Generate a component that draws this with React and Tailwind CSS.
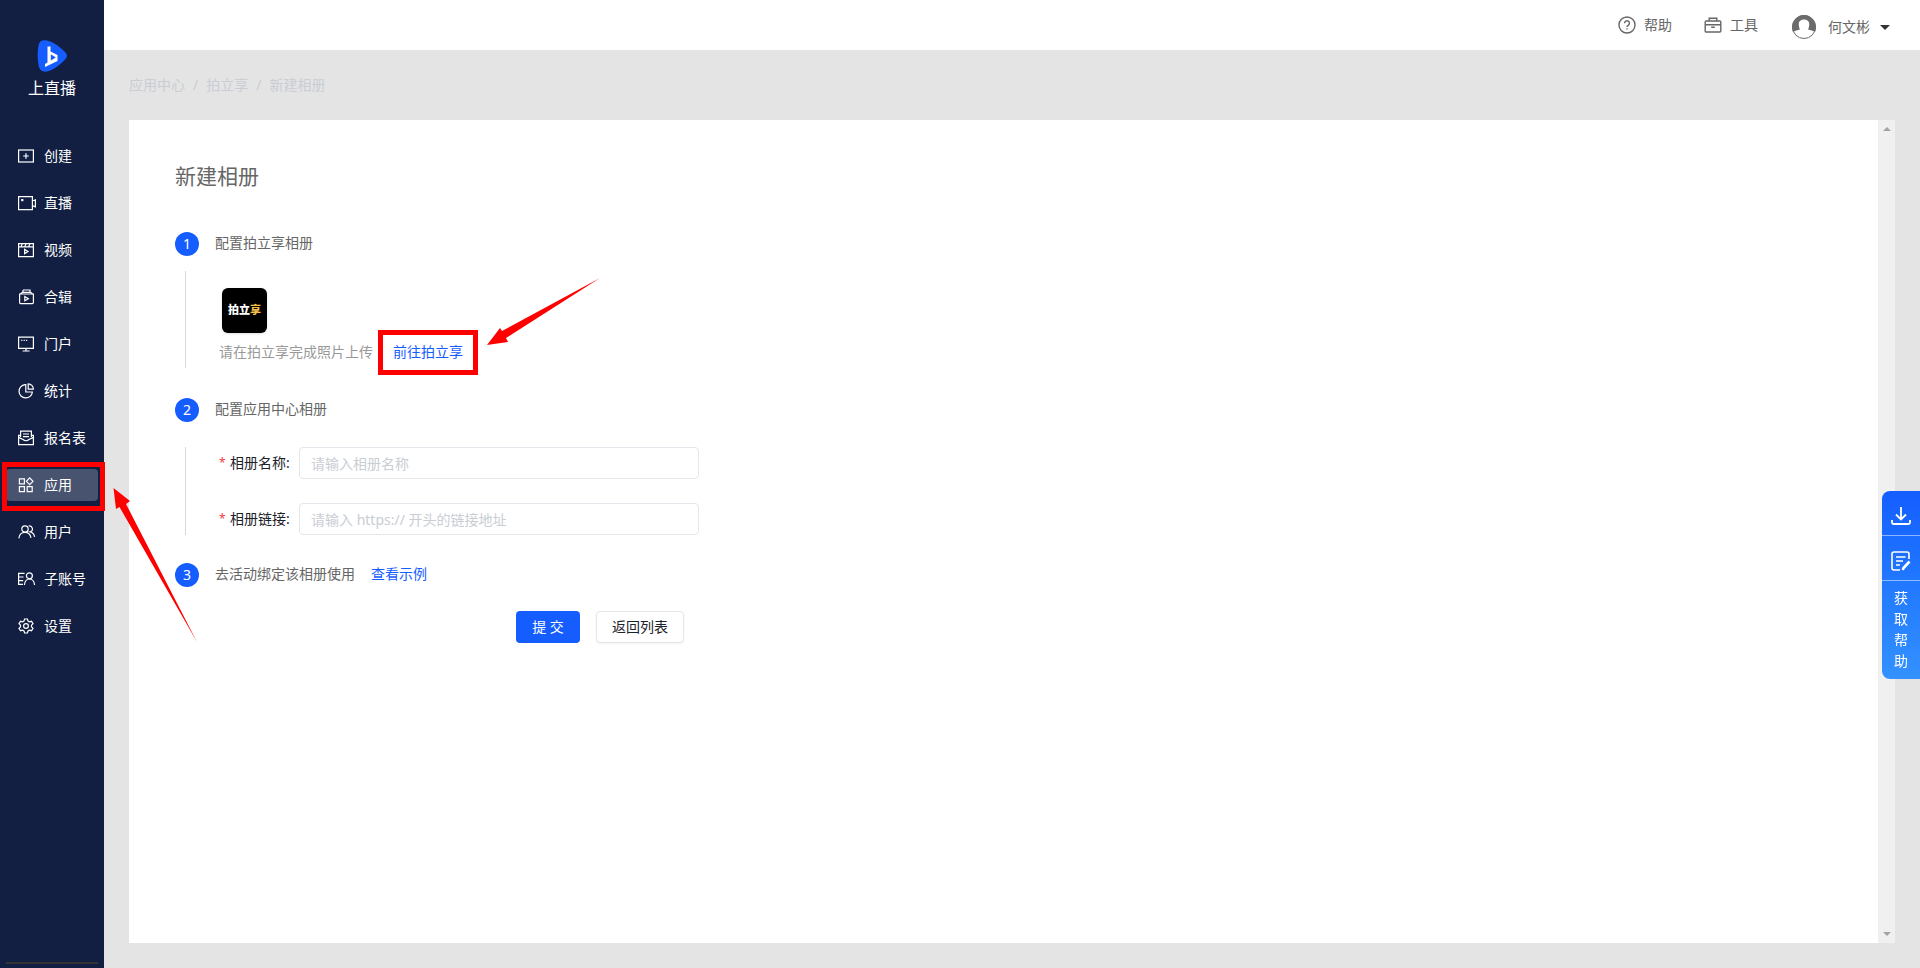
import { clsx } from 'clsx';

function Svg({ children, className, ...props }) {
  return (
    <svg
      viewBox="0 0 16 16"
      fill="none"
      stroke="currentColor"
      strokeWidth="1.2"
      className={clsx('shrink-0', className || 'size-4')}
      aria-hidden="true"
      {...props}
    >
      {children}
    </svg>
  );
}

const icons = {
  create: (
    <Svg>
      <rect x="0.6" y="2" width="14.8" height="12" />
      <path d="M8 5.2v5.6M5.2 8h5.6" />
    </Svg>
  ),
  live: (
    <Svg className="h-4 w-[18px]" viewBox="0 0 18 16">
      <path d="M0.6 1.6h13.8v13H0.6zM14.4 6l3-1.2v7l-3-1.2" />
      <rect x="3.2" y="4" width="2.2" height="2.2" fill="currentColor" stroke="none" />
    </Svg>
  ),
  video: (
    <Svg>
      <path d="M0.6 1.6h14.8v13H0.6zM0.6 4.8h14.8M4.4 1.6L3 4.8M8.2 1.6L6.8 4.8M12 1.6l-1.4 3.2" />
      <path d="M6.6 7.4v4.2L10 9.5z" />
    </Svg>
  ),
  album: (
    <Svg>
      <path d="M1.6 5h13.8v8.6a1 1 0 0 1-1 1H2.6a1 1 0 0 1-1-1zM2.4 5l2-1.7h8.2l2 1.7M5 1h7v2.2" />
      <path d="M6.8 7.6v4.2l3.6-2.1zM5 1v2.2" />
    </Svg>
  ),
  portal: (
    <Svg>
      <path d="M0.6 1.2h14.8v11.2H0.6zM8 12.4v2.4M4.6 15h7" />
      <path d="M3.2 4.4h1.2M5.6 4.4h1.2M8 4.4h1.2" />
    </Svg>
  ),
  stats: (
    <Svg>
      <path d="M7 1.6A6.7 6.7 0 1 0 14.4 9H7.8V1.6z" />
      <path d="M10.2 0.8v5.4h5.2A5.4 5.4 0 0 0 10.2 0.8z" />
    </Svg>
  ),
  form: (
    <Svg>
      <path d="M2.6 7V1.2h10.8V7M2.6 5.4H0.6v9.2h14.8V5.4h-2M0.6 7.4l4.4 2c1.4 1.8 4.6 1.8 6 0l4.4-2" />
      <path d="M5 4h6M5 6.6h6" />
    </Svg>
  ),
  apps: (
    <Svg>
      <path d="M1.4 1.8h5v5h-5zM1.4 9.6h5v5h-5zM9.2 9.6h5v5h-5zM11.7 0.9l3.3 3.4-3.3 3.4-3.3-3.4z" />
    </Svg>
  ),
  users: (
    <Svg className="h-4 w-[18px]" viewBox="0 0 18 16">
      <circle cx="7" cy="5" r="3.2" />
      <path d="M0.8 14.4c.4-3.4 2.8-6 6.2-6s5.4 2.4 6 5.4M10.6 2a3 3 0 0 1 1.6 5.8c2.4.6 4 2.4 4.4 5" />
    </Svg>
  ),
  subAccount: (
    <Svg className="h-4 w-[18px]" viewBox="0 0 18 16">
      <circle cx="11.4" cy="4.8" r="3" />
      <path d="M6.4 14c.4-3.6 2.4-6 5-6s4.8 2.4 5.2 6M6.6 2.4h-6v11H5M0.6 6h5M0.6 9.6h4.6" />
    </Svg>
  ),
  settings: (
    <Svg>
      <path d="M6.6 1h2.8l.6 2 1.5.8 2-.5L15 5.7l-1.5 1.5v1.6l1.5 1.5-1.5 2.4-2-.5-1.5.8-.6 2H6.600l-.6-2-1.5-.8-2 .5L1 10.3l1.5-1.5V7.200L1 5.700l1.500-2.400 2 .5L6 3z" />
      <circle cx="8" cy="8" r="2.4" />
    </Svg>
  ),
};

const menu = [
  { icon: 'create', label: '创建' },
  { icon: 'live', label: '直播' },
  { icon: 'video', label: '视频' },
  { icon: 'album', label: '合辑' },
  { icon: 'portal', label: '门户' },
  { icon: 'stats', label: '统计' },
  { icon: 'form', label: '报名表' },
  { icon: 'apps', label: '应用', active: true },
  { icon: 'users', label: '用户' },
  { icon: 'subAccount', label: '子账号' },
  { icon: 'settings', label: '设置' },
];

function Sidebar() {
  return (
    <aside className="flex w-[104px] shrink-0 flex-col bg-[#121f42] px-1.5 pb-1 text-white">
      <div className="flex flex-col items-center pt-10">
        <svg viewBox="0 0 30 32" className="h-8 w-[30px]" aria-hidden="true">
          <path
            d="M1.5 5.5C2 1.5 5-.3 9 .3c7 1 16 8 20 13 1.3 1.7 1.3 3.3 0 5-4 5-12 11.7-19 13.2-4 .7-7-1-8-4.5C.3 20 .3 12 1.5 5.5z"
            fill="#165dff"
          />
          <path d="M10.5 6.5h3v5l7 3.5v6L8 27v-3l2.5-1.5z" fill="#fff" />
          <path d="M13.8 14.2l5 3.2-5 3.2z" fill="#165dff" />
        </svg>
        <span className="mt-1 text-base leading-6">上直播</span>
      </div>
      <nav className="mt-10 flex flex-col gap-[15px]">
        {menu.map((item) => (
          <div key={item.label} className="relative">
            <a
              href="#"
              className={clsx(
                'flex h-8 items-center rounded-sm pl-3 text-sm',
                item.active && 'bg-[#47536f]'
              )}
            >
              <span className="w-[26px]">{icons[item.icon]}</span>
              {item.label}
            </a>
            {item.active && (
              <>
                <div className="pointer-events-none absolute -top-[7px] -left-1 z-10 h-[49px] w-[103px] border-5 border-[#f00]" />
                <svg
                  viewBox="0 0 84 154"
                  className="pointer-events-none absolute top-[19px] left-[107px] z-10 h-[154px] w-[84px]"
                  aria-hidden="true"
                >
                  <path d="M0.5 0L17 13l-4 3L84 154 6.5 19 3 21z" fill="#f00" />
                </svg>
              </>
            )}
          </div>
        ))}
      </nav>
      <div className="mt-auto h-0.5 bg-[#333]" />
    </aside>
  );
}

function Header() {
  return (
    <header className="flex h-[50px] items-center justify-end bg-white pr-[30px] text-sm text-[#666]">
      <a href="#" className="flex items-center gap-2">
        <Svg className="size-[18px]" viewBox="0 0 18 18" strokeWidth="1.4">
          <circle cx="9" cy="9" r="8" />
          <path d="M6.6 7.2a2.4 2.4 0 1 1 3.6 2.1c-.8.5-1.2.9-1.2 1.8M9 12.2v1.3" />
        </Svg>
        帮助
      </a>
      <a href="#" className="ml-8 flex items-center gap-2">
        <Svg className="size-[18px]" viewBox="0 0 18 18" strokeWidth="1.4">
          <rect x="1.2" y="5" width="15.6" height="11" rx="1" />
          <path d="M5.2 5V2.2h7.6V5M1.2 8.8h15.6M7.2 11.2h3.6" />
        </Svg>
        工具
      </a>
      <button type="button" className="ml-[34px] flex items-center pt-1">
        <svg viewBox="0 0 24 24" className="size-6" aria-hidden="true">
          <circle cx="12" cy="12" r="11.5" fill="#fff" stroke="#6b6b6b" />
          <path
            d="M12 0a12 12 0 0 0-11 16.8c2-.9 4.500-1.500 7-2.300C7 12.800 6.800 10.800 6.800 9 6.800 6 9 4.400 12 4.400s5.200 1.600 5.200 4.600c0 1.800-.2 3.800-1.200 5.500 2.500.8 5 1.400 7 2.300A12 12 0 0 0 12 0z"
            fill="#6b6b6b"
          />
        </svg>
        <span className="ml-3">何文彬</span>
        <svg viewBox="0 0 10 5" className="ml-2.5 h-[5px] w-2.5" aria-hidden="true">
          <path d="M0 0h10L5 5z" fill="#333" />
        </svg>
      </button>
    </header>
  );
}

function Step({ number, title, children }) {
  return (
    <div className="flex h-6 items-start">
      <span className="flex size-6 items-center justify-center rounded-full bg-[#165dff] text-sm text-white">
        {number}
      </span>
      <h2 className="ml-4 text-sm leading-[22px] text-[#666]">{title}</h2>
      {children}
    </div>
  );
}

function Field({ id, label, placeholder }) {
  return (
    <div className="flex items-center">
      <label htmlFor={id} className="flex w-20 items-center whitespace-nowrap text-sm text-[#1d2129]">
        <span className="w-[11px] text-xs text-[#f53f3f]">*</span>
        {label}:
      </label>
      <input
        id={id}
        type="text"
        placeholder={placeholder}
        className="h-8 w-[400px] rounded border border-[#e5e6eb] bg-white px-[11px] text-sm placeholder:text-[#c9cdd4]"
      />
    </div>
  );
}

function AlbumForm() {
  return (
    <form className="flex-1 pt-10 pl-[46px]" onSubmit={(e) => e.preventDefault()}>
      <h1 className="mb-10 text-[21px] leading-8 text-[#666]">新建相册</h1>

      <Step number={1} title="配置拍立享相册" />
      <div className="mt-[15px] mb-[30px] ml-2.5 border-l border-[#d9d9d9] pt-[17px] pb-[5px] pl-[33px]">
        <div className="ml-[3px] flex size-[45px] items-center justify-center rounded-md bg-black text-[11px] font-black text-white shadow-sm">
          拍立<span className="text-[#f5c04a]">享</span>
        </div>
        <div className="mt-2 flex text-sm leading-[22px]">
          <span className="text-[#999]">请在拍立享完成照片上传</span>
          <div className="relative ml-5">
            <a href="#" className="text-[#165dff]">前往拍立享</a>
            <div className="pointer-events-none absolute -top-[11px] -left-[15px] h-[45px] w-[100px] border-5 border-[#f00]" />
            <svg
              viewBox="0 0 113 67"
              className="pointer-events-none absolute -top-[63px] left-[94px] h-[67px] w-[113px]"
              aria-hidden="true"
            >
              <path d="M0 67L13 50l2 3L113 0 19 60l2 4z" fill="#f00" />
            </svg>
          </div>
        </div>
      </div>

      <Step number={2} title="配置应用中心相册" />
      <div className="mt-[25px] mb-7 ml-2.5 flex flex-col gap-6 border-l border-[#d9d9d9] pl-[33px]">
        <Field id="album-name" label="相册名称" placeholder="请输入相册名称" />
        <Field id="album-link" label="相册链接" placeholder="请输入 https:// 开头的链接地址" />
      </div>

      <Step number={3} title="去活动绑定该相册使用">
        <a href="#" className="ml-4 text-sm leading-[22px] text-[#165dff]">查看示例</a>
      </Step>

      <div className="mt-6 flex w-[509px] justify-end gap-4 text-sm">
        <button type="submit" className="h-8 w-16 rounded bg-[#165dff] text-white">
          提 交
        </button>
        <button
          type="button"
          className="h-8 w-[88px] rounded border border-[#e5e6eb] bg-white text-[#1d2129] shadow-xs"
        >
          返回列表
        </button>
      </div>
    </form>
  );
}

function HelpDock() {
  return (
    <div className="fixed top-[491px] right-0 z-20 flex w-[38px] flex-col rounded-l-lg bg-linear-to-b from-[#165dff] to-[#3491ff] text-white">
      <button type="button" aria-label="下载" className="flex h-[45px] items-center justify-center border-b border-white/50 pt-1.5">
        <Svg className="size-5" viewBox="0 0 20 20" strokeWidth="1.8">
          <path d="M10 1v12M5 8.5l5 5 5-5M1 14v2.5A1.5 1.5 0 0 0 2.5 18h15a1.5 1.5 0 0 0 1.5-1.5V14" />
        </Svg>
      </button>
      <button type="button" aria-label="反馈" className="flex h-[45px] items-center justify-center border-b border-white/50 pt-1.5">
        <Svg className="size-5" viewBox="0 0 20 20" strokeWidth="1.6">
          <path d="M18 8V3a2 2 0 0 0-2-2H3a2 2 0 0 0-2 2v14a2 2 0 0 0 2 2h6M5 6h9.5M5 10h7M5 14h4" />
          <path d="M18.5 10.5L12.5 17l-.8 2" strokeWidth="2.6" />
        </Svg>
      </button>
      <button type="button" className="flex flex-col items-center pt-1.5 pb-2 text-sm leading-[21px]">
        {'获取帮助'.split('').map((char) => (
          <span key={char}>{char}</span>
        ))}
      </button>
    </div>
  );
}

export default function App() {
  return (
    <div className="flex min-h-screen bg-[#e4e4e4] font-['Noto_Sans','Noto_Sans_CJK_SC',sans-serif]">
      <Sidebar />
      <div className="flex min-w-0 flex-1 flex-col">
        <Header />
        <main className="flex flex-1 flex-col px-[25px] pb-[25px]">
          <nav className="flex h-[70px] items-center gap-2 text-sm text-[#c9cdd4]">
            <a href="#">应用中心</a>
            <span>/</span>
            <a href="#">拍立享</a>
            <span>/</span>
            <span>新建相册</span>
          </nav>
          <section className="flex flex-1 bg-white">
            <AlbumForm />
            <div className="flex w-[17px] flex-col items-center justify-between bg-[#f0f0f0] py-[7px]">
              <svg viewBox="0 0 8 4" className="h-1 w-2" aria-hidden="true">
                <path d="M0 4h8L4 0z" fill="#a3a3a3" />
              </svg>
              <svg viewBox="0 0 8 4" className="h-1 w-2" aria-hidden="true">
                <path d="M0 0h8L4 4z" fill="#a3a3a3" />
              </svg>
            </div>
          </section>
        </main>
      </div>
      <HelpDock />
    </div>
  );
}
